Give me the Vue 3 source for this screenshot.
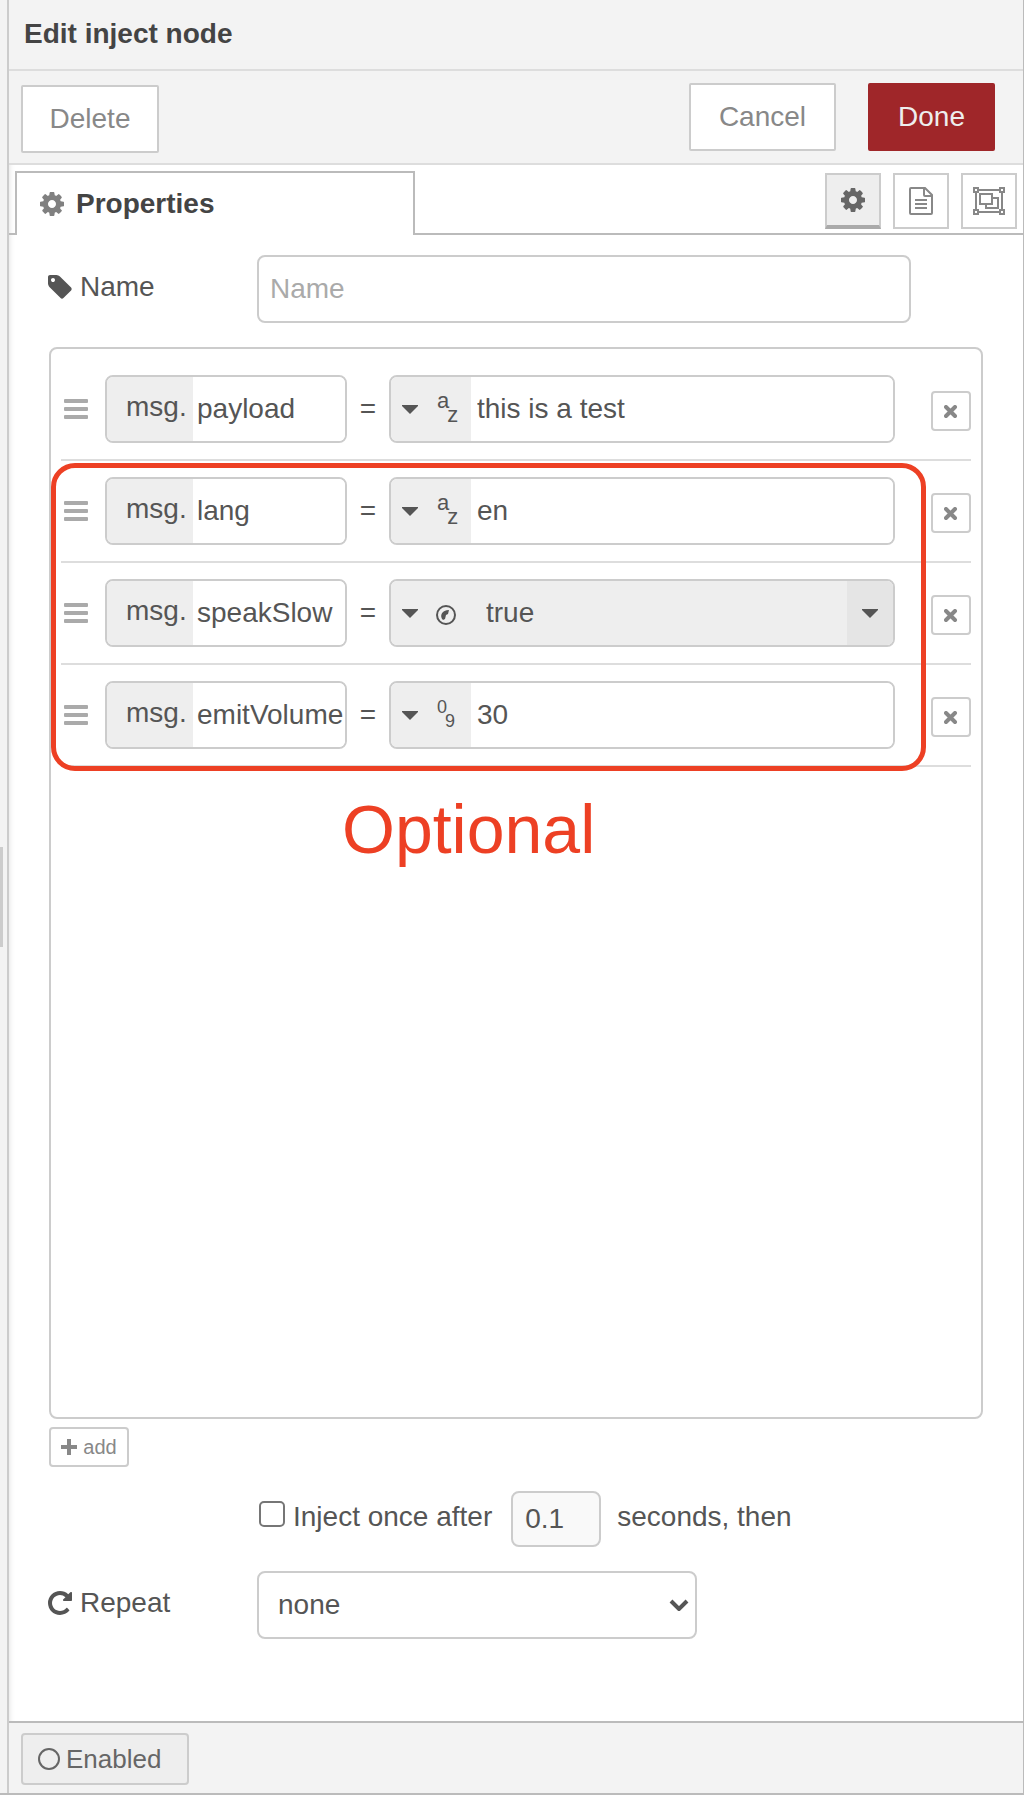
<script setup>
import { reactive, ref } from 'vue'

const rows = reactive([
  { key: 'payload', type: 'str', value: 'this is a test' },
  { key: 'lang', type: 'str', value: 'en' },
  { key: 'speakSlow', type: 'bool', value: 'true' },
  { key: 'emitVolume', type: 'num', value: '30' },
])
const groups = [
  { name: 'required', optional: false, items: rows.slice(0, 1) },
  { name: 'optional', optional: true, items: rows.slice(1) },
]
const typeNames = { str: 'string', bool: 'boolean', num: 'number' }
const typeMarks = { str: ['a', 'z'], num: ['0', '9'] }

const name = ref('')
const once = ref(false)
const delay = ref('0.1')
const repeat = ref('none')

const cog =
  'M1152 896q0-106-75-181t-181-75-181 75-75 181 75 181 181 75 181-75 75-181zm512-109v222q0 12-8 23t-20 13l-185 28q-19 54-39 91 35 50 107 138 10 12 10 25t-9 23q-27 37-99 108t-94 71q-12 0-26-9l-138-108q-44 23-91 38-16 136-29 186-7 28-36 28h-222q-14 0-24.5-8.5t-11.5-21.5l-28-184q-49-16-90-37l-141 107q-10 9-25 9-14 0-25-11-126-114-165-168-7-10-7-23 0-12 8-23 15-21 51-66.5t54-70.5q-27-50-41-99l-183-27q-13-2-21-12.5t-8-23.5v-222q0-12 8-23t19-13l186-28q14-46 39-92-40-57-107-138-10-12-10-24 0-10 9-23 26-36 98.5-107.5t94.5-71.5q13 0 26 10l138 107q44-23 91-38 16-136 29-186 7-28 36-28h222q14 0 24.5 8.5t11.5 21.5l28 184q49 16 90 37l142-107q9-9 24-9 13 0 25 10 129 119 165 170 7 8 7 22 0 12-8 23-15 21-51 66.5t-54 70.5q26 50 41 98l183 28q13 2 21 12.5t8 23.5z'
const tag =
  'M576 448q0-53-37.5-90.5t-90.5-37.5-90.5 37.5-37.5 90.5 37.5 90.5 90.5 37.5 90.5-37.5 37.5-90.5zm1067 576q0 53-37 90l-491 492q-39 37-91 37-53 0-90-37l-715-716q-38-37-64.5-101t-26.5-117v-416q0-52 38-90t90-38h416q53 0 117 26.5t102 64.5l715 714q37 39 37 91z'
const rotate =
  'M1664 256v448q0 26-19 45t-45 19h-448q-42 0-59-40-17-39 14-69l138-138q-148-137-349-137-104 0-198.5 40.5t-163.5 109.5-109.5 163.5-40.5 198.5 40.5 198.5 109.5 163.5 163.5 109.5 198.5 40.5q119 0 225-52t179-147q7-10 23-12 15 0 25 9l137 138q9 8 9.5 20.5t-7.5 22.5q-109 132-264 204.5t-327 72.5q-156 0-298-61t-245-164-164-245-61-298 61-298 164-245 245-164 298-61q147 0 284.5 55.5t244.5 156.5l130-129q29-31 70-14 39 17 39 59z'
</script>

<template>
  <div class="page">
    <div class="gutter"><span class="grip"></span></div>

    <main class="tray">
      <header class="title"><h1>Edit inject node</h1></header>

      <div class="toolbar">
        <button type="button" class="btn delete">Delete</button>
        <div class="actions">
          <button type="button" class="btn">Cancel</button>
          <button type="button" class="btn primary">Done</button>
        </div>
      </div>

      <nav class="tabs">
        <a class="tab" href="#properties">
          <svg class="fa" viewBox="128 128 1536 1536"><path :d="cog" /></svg>
          <span>Properties</span>
        </a>
        <div class="views">
          <button type="button" class="view active" aria-label="Properties">
            <svg class="fa" viewBox="128 128 1536 1536"><path :d="cog" /></svg>
          </button>
          <button type="button" class="view" aria-label="Description">
            <svg width="24" height="28" viewBox="0 0 24 28" fill="none" stroke="currentColor" stroke-width="2">
              <path d="M2 1H16L23 8V26Q23 27 22 27H2Q1 27 1 26V2Q1 1 2 1Z" />
              <path d="M15 1V8Q15 9 16 9H23M6 13H18M6 17H18M6 21H18" />
            </svg>
          </button>
          <button type="button" class="view" aria-label="Appearance">
            <svg width="32" height="28" viewBox="0 0 32 28" fill="none" stroke="currentColor" stroke-width="2">
              <path d="M5 3H27M5 25H27M3 5V23M29 5V23" />
              <path d="M1 1H5V5H1ZM27 1H31V5H27ZM1 23H5V27H1ZM27 23H31V27H27Z" />
              <path d="M7 7H19V17H7ZM20 11H25V21H13V18" />
            </svg>
          </button>
        </div>
      </nav>

      <form class="form" @submit.prevent>
        <div class="field name-field">
          <label class="label" for="node-name">
            <svg class="fa" viewBox="128 128 1536 1536"><path :d="tag" /></svg>
            <span>Name</span>
          </label>
          <input id="node-name" v-model="name" class="box name" type="text" placeholder="Name" />
        </div>

        <div class="list">
          <div v-for="g in groups" :key="g.name" class="group">
            <div v-for="row in g.items" :key="row.key" class="row">
              <span class="handle"><i></i><i></i><i></i></span>

              <div class="typed key">
                <label class="prefix" :for="'key-' + row.key">msg.</label>
                <input :id="'key-' + row.key" v-model="row.key" type="text" />
              </div>
              <span class="equals">=</span>

              <div class="typed value">
                <button type="button" class="type" :aria-label="'Type: ' + typeNames[row.type]">
                  <svg class="caret" viewBox="0 0 16 9"><path d="M0 0H16V1L8 9L0 1Z" /></svg>
                  <svg v-if="row.type === 'bool'" class="bool" viewBox="0 0 20 20">
                    <circle cx="10" cy="10" r="9" fill="none" stroke="currentColor" stroke-width="2" />
                    <path d="M7 15C3 11 6 5 13 5L12 9L10 10L9 14Z" />
                  </svg>
                  <span v-else class="marks" :class="row.type">
                    <span>{{ typeMarks[row.type][0] }}</span>
                    <span>{{ typeMarks[row.type][1] }}</span>
                  </span>
                </button>
                <div v-if="row.type === 'bool'" class="option">
                  <select v-model="row.value" aria-label="Value">
                    <option>true</option>
                    <option>false</option>
                  </select>
                  <span class="open">
                    <svg class="caret" viewBox="0 0 16 9"><path d="M0 0H16V1L8 9L0 1Z" /></svg>
                  </span>
                </div>
                <input v-else v-model="row.value" type="text" aria-label="Value" />
              </div>

              <button type="button" class="small remove" aria-label="Remove">
                <svg width="14" height="14" viewBox="0 0 14 14" stroke="currentColor" stroke-width="4" stroke-linecap="round">
                  <path d="M2 2L11 11M11 2L2 11" />
                </svg>
              </button>
            </div>
            <div v-if="g.optional" class="marker"></div>
          </div>
          <p class="note">Optional</p>
        </div>

        <button type="button" class="small add">
          <svg width="16" height="16" viewBox="0 0 16 16"><path d="M6 0H10V6H16V10H10V16H6V10H0V6H6Z" /></svg>
          <span>add</span>
        </button>

        <div class="field once-field">
          <input id="once" v-model="once" type="checkbox" class="check" />
          <label class="once" for="once">Inject once after</label>
          <input id="delay" v-model="delay" class="box delay" type="text" />
          <label class="once" for="delay">seconds, then</label>
        </div>

        <div class="field repeat-field">
          <label class="label" for="repeat">
            <svg class="fa" viewBox="128 128 1536 1536"><path :d="rotate" /></svg>
            <span>Repeat</span>
          </label>
          <div class="choice">
            <select id="repeat" v-model="repeat" class="box repeat">
              <option>none</option>
              <option>interval</option>
            </select>
            <svg class="chevron" viewBox="0 0 20 12"><path d="M2 2L10 10L18 2" /></svg>
          </div>
        </div>
      </form>

      <footer class="footer">
        <button type="button" class="enabled">
          <svg width="22" height="22" viewBox="0 0 22 22"><circle cx="11" cy="11" r="10" /></svg>
          <span>Enabled</span>
        </button>
      </footer>
    </main>
  </div>
</template>

<style>
body {
  margin: 0;
  background: #fff;
}
</style>

<style scoped>
.page,
.page * {
  box-sizing: border-box;
}
.page {
  display: flex;
  min-height: 100vh;
  border-right: 1px solid #bbb;
  border-bottom: 2px solid #bbb;
  color: #555;
  font: 28px/40px "Liberation Sans", Arial, Helvetica, sans-serif;
}
button,
input,
select {
  margin: 0;
  font: inherit;
  color: inherit;
}
button {
  cursor: pointer;
}
svg {
  display: block;
  flex: none;
  fill: currentColor;
}
svg[fill="none"] {
  fill: none;
}
.fa {
  width: 24px;
  height: 24px;
}

.gutter {
  display: flex;
  align-items: center;
  width: 9px;
  flex: none;
  background: #f3f3f3;
  border-right: 2px solid #ccc;
}
.grip {
  width: 3px;
  height: 100px;
  background: #ccc;
}

.tray {
  display: flex;
  flex-direction: column;
  flex: 1;
  min-width: 0;
  box-shadow: inset 6px 0 6px -6px #ddd;
}
.title {
  height: 71px;
  padding: 14px 15px;
  background: #f3f3f3;
  border-bottom: 2px solid #ddd;
}
h1 {
  margin: 0;
  font-size: 28px;
  line-height: 40px;
  color: #444;
}

.toolbar {
  display: flex;
  justify-content: space-between;
  padding: 12px 28px 10px 12px;
  background: #f3f3f3;
  border-bottom: 2px solid #ddd;
}
.actions {
  display: flex;
  gap: 32px;
}
.btn {
  height: 68px;
  padding: 0 28px;
  color: #888;
  background: #fff;
  border: 2px solid #ccc;
  border-radius: 2px;
}
.delete {
  margin-top: 2px;
  min-width: 138px;
  padding: 0 26px;
}
.btn.primary {
  color: #eee;
  background: #9f2629;
  border-color: #9f2629;
}

.tabs {
  display: flex;
  justify-content: space-between;
  height: 70px;
  padding: 6px 6px 0;
  background: linear-gradient(#bbb, #bbb) bottom / 100% 2px no-repeat;
}
.tab {
  display: flex;
  align-items: center;
  gap: 12px;
  width: 400px;
  padding: 0 23px;
  color: #444;
  font-weight: bold;
  text-decoration: none;
  background: #fff;
  border: 2px solid #bbb;
  border-bottom: 0;
}
.tab .fa {
  color: #808080;
}
.views {
  display: flex;
  gap: 12px;
  padding-top: 2px;
}
.view {
  display: flex;
  align-items: center;
  justify-content: center;
  width: 56px;
  height: 56px;
  padding: 0;
  color: #888;
  background: #fff;
  border: 2px solid #ccc;
}
.view.active {
  color: #666;
  background: #eee;
  border-bottom: 4px solid #aaa;
}

.form {
  display: flex;
  flex-direction: column;
  flex: 1;
  padding: 20px 40px 82px;
}
.field {
  display: flex;
  align-items: center;
}
.label {
  display: flex;
  align-items: center;
  gap: 8px;
  width: 208px;
  padding-bottom: 4px;
  flex: none;
}
.label .fa {
  margin-left: -1px;
}
.box {
  background: #fff;
  border: 2px solid #ccc;
  border-radius: 8px;
}
.name-field {
  padding-right: 72px;
}
.name {
  flex: 1;
  min-width: 0;
  height: 68px;
  padding: 0 11px;
}
.name::placeholder {
  color: #aaa;
  opacity: 1;
}

.list {
  flex: 1;
  margin-top: 24px;
  padding: 10px;
  border: 2px solid #ccc;
  border-radius: 8px;
}
.group {
  position: relative;
}
.row {
  display: flex;
  align-items: center;
  padding: 16px 0 16px 3px;
  border-bottom: 2px solid #ddd;
}
.handle {
  display: flex;
  flex-direction: column;
  gap: 4px;
  width: 24px;
  margin-right: 17px;
  flex: none;
}
.handle i {
  height: 4px;
  background: #aaa;
  border-radius: 1px;
}
.typed {
  display: flex;
  height: 68px;
  overflow: hidden;
  border: 2px solid #ccc;
  border-radius: 8px;
}
.typed input {
  flex: 1;
  min-width: 0;
  padding: 0 0 0 4px;
  background: #fff;
  border: 0;
}
.key {
  width: 242px;
  flex: none;
}
.prefix {
  display: flex;
  align-items: center;
  width: 86px;
  padding: 0 0 4px 19px;
  background: #eee;
}
.equals {
  width: 42px;
  text-align: center;
}
.value {
  flex: 1;
  min-width: 0;
}
.value input {
  padding-left: 6px;
}
.type {
  display: flex;
  align-items: center;
  gap: 19px;
  width: 80px;
  padding: 0 0 0 11px;
  background: #eee;
  border: 0;
}
.caret {
  width: 16px;
  height: 9px;
}
.marks {
  display: flex;
  font-size: 22px;
  line-height: 24px;
}
.marks.num {
  font-size: 18px;
}
.marks span:first-child {
  padding-bottom: 16px;
}
.marks span:last-child {
  padding-top: 14px;
  margin-left: -2px;
}
.bool {
  width: 20px;
  height: 20px;
  margin: 4px 0 0 -1px;
}
.option {
  position: relative;
  display: flex;
  flex: 1;
}
.option select {
  flex: 1;
  padding: 0 62px 0 15px;
  appearance: none;
  background: #eee;
  border: 0;
}
.open {
  position: absolute;
  top: 0;
  right: 0;
  bottom: 0;
  display: flex;
  align-items: center;
  justify-content: center;
  width: 46px;
  background: #e5e5e5;
  pointer-events: none;
}
.small {
  display: flex;
  align-items: center;
  justify-content: center;
  height: 40px;
  padding: 0;
  color: #888;
  background: #fff;
  border: 2px solid #ccc;
  border-radius: 4px;
}
.remove {
  width: 40px;
  margin: 4px 0 0 36px;
  padding-top: 2px;
  flex: none;
}
.marker {
  position: absolute;
  top: 2px;
  right: 45px;
  bottom: -4px;
  left: -10px;
  border: 5px solid #ed4024;
  border-radius: 24px;
  pointer-events: none;
}
.note {
  margin: 28px 0 0 281px;
  color: #ed4024;
  font-size: 68px;
  line-height: 68px;
}

.add {
  gap: 6px;
  width: 80px;
  margin-top: 8px;
  font-size: 20px;
}

.once-field {
  margin-top: 24px;
  padding-left: 210px;
}
.check {
  width: 26px;
  height: 26px;
  margin: 0 8px 10px 0;
  appearance: none;
  background: #fff;
  border: 2px solid #767676;
  border-radius: 5px;
}
.check:checked {
  background: #767676;
}
.once {
  padding-bottom: 4px;
}
.delay {
  width: 90px;
  height: 56px;
  margin: 0 16px 0 19px;
  padding: 0 12px;
  background: #f9f9f9;
}

.repeat-field {
  margin-top: 24px;
}
.choice {
  position: relative;
  width: 440px;
}
.repeat {
  display: block;
  width: 100%;
  height: 68px;
  padding: 0 40px 0 19px;
  appearance: none;
}
.chevron {
  position: absolute;
  top: 28px;
  right: 8px;
  width: 20px;
  height: 12px;
  fill: none;
  stroke: currentColor;
  stroke-width: 4;
  pointer-events: none;
}

.footer {
  padding: 10px 12px 8px;
  background: #f3f3f3;
  border-top: 2px solid #bbb;
}
.enabled {
  display: flex;
  align-items: center;
  gap: 6px;
  width: 168px;
  height: 52px;
  padding: 0 0 0 15px;
  color: #666;
  font-size: 26px;
  background: #eee;
  border: 2px solid #ccc;
  border-radius: 4px;
}
.enabled svg {
  fill: none;
  stroke: currentColor;
  stroke-width: 2;
}
</style>
